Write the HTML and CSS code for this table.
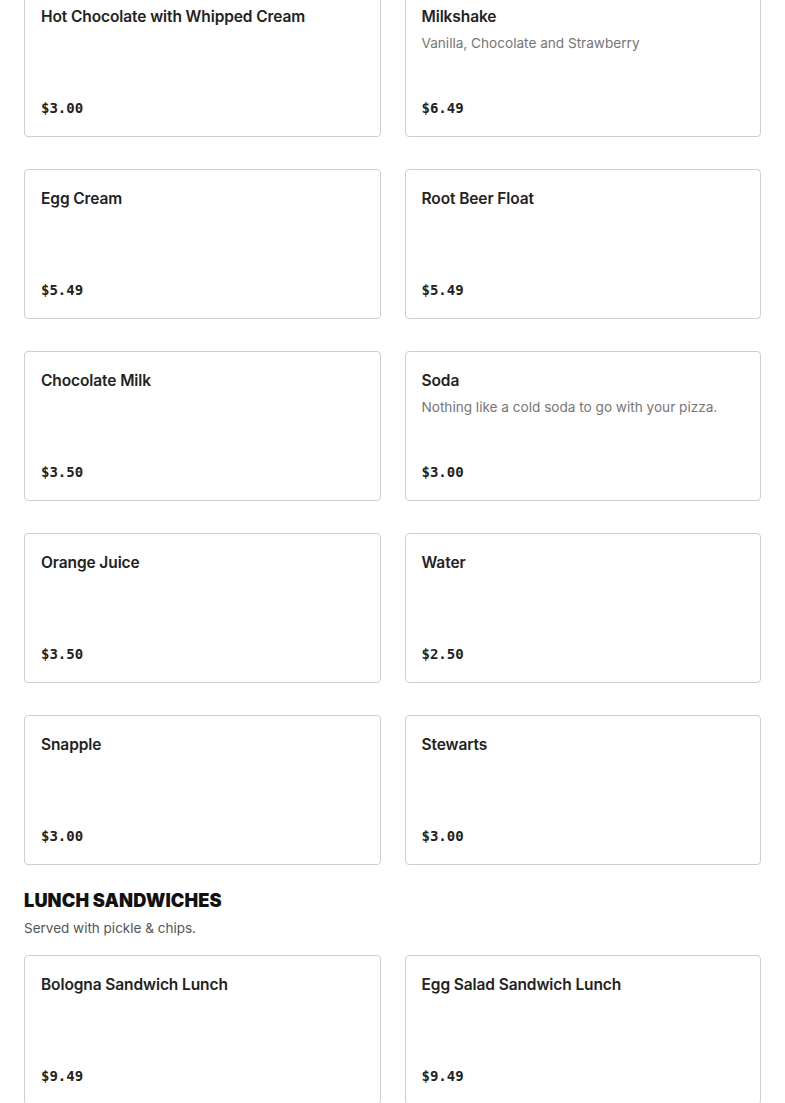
FILE: index.html
```html
<!DOCTYPE html>
<html>
<head>
<meta charset="utf-8">
<link rel="stylesheet" href="styles.css">
</head>
<body>
<main class="menu">
  <section class="section section-first">
    <div class="grid">
      <div class="card"><div class="info"><h3 class="name">Hot Chocolate with Whipped Cream</h3></div><div class="price">$3.00</div></div>
      <div class="card"><div class="info"><h3 class="name">Milkshake</h3><p class="desc">Vanilla, Chocolate and Strawberry</p></div><div class="price">$6.49</div></div>
      <div class="card"><div class="info"><h3 class="name">Egg Cream</h3></div><div class="price">$5.49</div></div>
      <div class="card"><div class="info"><h3 class="name">Root Beer Float</h3></div><div class="price">$5.49</div></div>
      <div class="card"><div class="info"><h3 class="name">Chocolate Milk</h3></div><div class="price">$3.50</div></div>
      <div class="card"><div class="info"><h3 class="name">Soda</h3><p class="desc">Nothing like a cold soda to go with your pizza.</p></div><div class="price">$3.00</div></div>
      <div class="card"><div class="info"><h3 class="name">Orange Juice</h3></div><div class="price">$3.50</div></div>
      <div class="card"><div class="info"><h3 class="name">Water</h3></div><div class="price">$2.50</div></div>
      <div class="card"><div class="info"><h3 class="name">Snapple</h3></div><div class="price">$3.00</div></div>
      <div class="card"><div class="info"><h3 class="name">Stewarts</h3></div><div class="price">$3.00</div></div>
    </div>
  </section>
  <section class="section">
    <h2 class="section-title">LUNCH SANDWICHES</h2>
    <p class="section-sub">Served with pickle &amp; chips.</p>
    <div class="grid">
      <div class="card"><div class="info"><h3 class="name">Bologna Sandwich Lunch</h3></div><div class="price">$9.49</div></div>
      <div class="card"><div class="info"><h3 class="name">Egg Salad Sandwich Lunch</h3></div><div class="price">$9.49</div></div>
    </div>
  </section>
</main>
</body>
</html>
```
FILE: styles.css
```css
html, body {
  margin: 0;
  padding: 0;
  background: #fff;
}
body {
  font-family: "Inter", "Liberation Sans", sans-serif;
  color: #1f1f1f;
}
.menu {
  padding: 0 24px;
  margin-top: -13px;
}
.section-first {
  margin-bottom: 23px;
}
.grid {
  display: grid;
  grid-template-columns: 1fr 1fr;
  column-gap: 24px;
  row-gap: 32px;
}
.card {
  box-sizing: border-box;
  height: 150px;
  border: 1px solid #cfcfcf;
  border-radius: 4px;
  padding: 17px 16px 16px;
  display: flex;
  flex-direction: column;
  justify-content: space-between;
}
.name {
  margin: 0;
  font-size: 15.5px;
  font-weight: 600;
  line-height: 24px;
  color: #222;
  letter-spacing: -0.1px;
}
.desc {
  margin: 4px 0 0;
  font-size: 13.6px;
  line-height: 20px;
  color: #767676;
}
.price {
  font-family: "DejaVu Sans Mono", "Liberation Mono", monospace;
  font-weight: 700;
  font-size: 14px;
  line-height: 24px;
  color: #222;
}
.section-title {
  margin: 0;
  font-size: 18.2px;
  font-weight: 900;
  line-height: 24px;
  color: #111;
  letter-spacing: 0.1px;
}
.section-sub {
  margin: 6px 0 17px;
  font-size: 13.5px;
  line-height: 20px;
  color: #555;
}
```
